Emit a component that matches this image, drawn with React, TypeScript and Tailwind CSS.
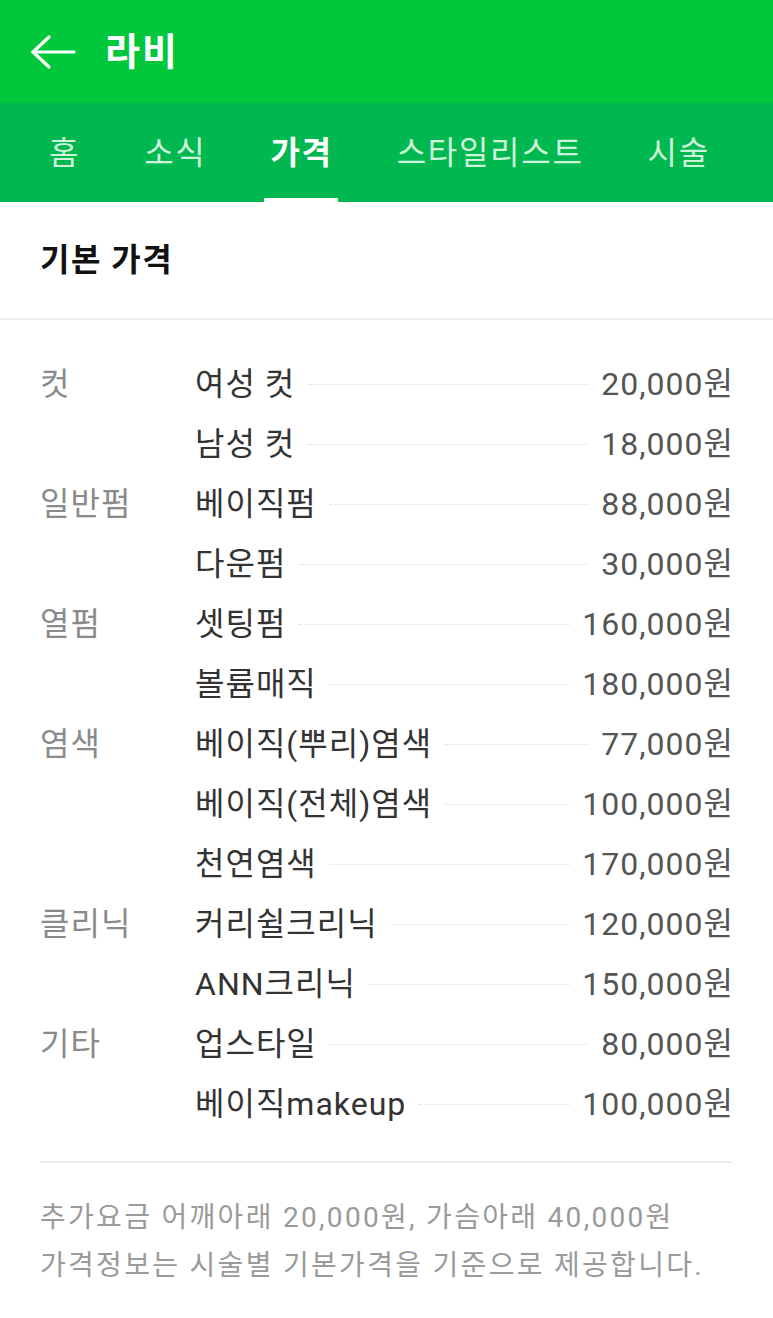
import React from "react";

const font = { fontFamily: 'Roboto, "Noto Sans CJK KR", sans-serif' };

type Row = { cat?: string; name: string; price: string };

const rows: Row[] = [
  { cat: "컷", name: "여성 컷", price: "20,000원" },
  { name: "남성 컷", price: "18,000원" },
  { cat: "일반펌", name: "베이직펌", price: "88,000원" },
  { name: "다운펌", price: "30,000원" },
  { cat: "열펌", name: "셋팅펌", price: "160,000원" },
  { name: "볼륨매직", price: "180,000원" },
  { cat: "염색", name: "베이직(뿌리)염색", price: "77,000원" },
  { name: "베이직(전체)염색", price: "100,000원" },
  { name: "천연염색", price: "170,000원" },
  { cat: "클리닉", name: "커리쉴크리닉", price: "120,000원" },
  { name: "ANN크리닉", price: "150,000원" },
  { cat: "기타", name: "업스타일", price: "80,000원" },
  { name: "베이직makeup", price: "100,000원" },
];

const tabs = ["홈", "소식", "가격", "스타일리스트", "시술"];

export default function App() {
  return (
    <div className="w-[773px] min-h-[1318px] bg-white" style={font}>
      <div className="h-[103px] bg-[#00c73c] flex items-center pl-[30px]">
        <svg width="46" height="36" viewBox="0 0 46 36" fill="none" stroke="white" strokeWidth="3.2" strokeLinecap="round" strokeLinejoin="round">
          <path d="M44 18H3" />
          <path d="M19 3L3 18L19 33" />
        </svg>
        <span className="ml-[29px] text-white text-[38px] tracking-[2px] font-bold leading-none">라비</span>
      </div>
      <div className="h-[99px] bg-[#00b84f] flex items-stretch pl-[17px]">
        {tabs.map((t) => {
          const active = t === "가격";
          return (
            <div key={t} className="px-[26px] flex items-stretch">
              <div className="relative px-[6px] flex items-center">
                <span className={"text-[32px] tracking-[1.7px] leading-none " + (active ? "text-white font-bold" : "text-[#cdf3da]")}>
                  {t}
                </span>
                {active && <div className="absolute bottom-0 left-0 right-[1px] h-[4px] bg-white" />}
              </div>
            </div>
          );
        })}
      </div>
      <div className="h-[118px] flex items-center px-[40px] border-b-2 border-[#eeeeee]">
        <span className="text-[32px] tracking-[1.5px] font-bold text-[#111] leading-none">기본 가격</span>
      </div>
      <div className="px-[40px] pt-[34px]">
        {rows.map((r, i) => (
          <div key={i} className="h-[60px] flex items-center text-[32px] tracking-[1px] leading-none">
            <div className="w-[155px] shrink-0 text-[#8a8a8a]">{r.cat ?? ""}</div>
            <div className="text-[#333] whitespace-nowrap">{r.name}</div>
            <div className="flex-1 mx-[13px] border-t border-dotted border-[#dcdcdc]" />
            <div className="text-[#555] whitespace-nowrap -mr-[1px]">{r.price}</div>
          </div>
        ))}
        <div className="mt-[27px] border-t-2 border-[#eeeeee]" />
        <div className="pt-[31px] text-[28px] tracking-[2.3px] leading-[48px] text-[#9a9a9a]">
          <div>추가요금 어깨아래 20,000원, 가슴아래 40,000원</div>
          <div>가격정보는 시술별 기본가격을 기준으로 제공합니다.</div>
        </div>
      </div>
    </div>
  );
}
